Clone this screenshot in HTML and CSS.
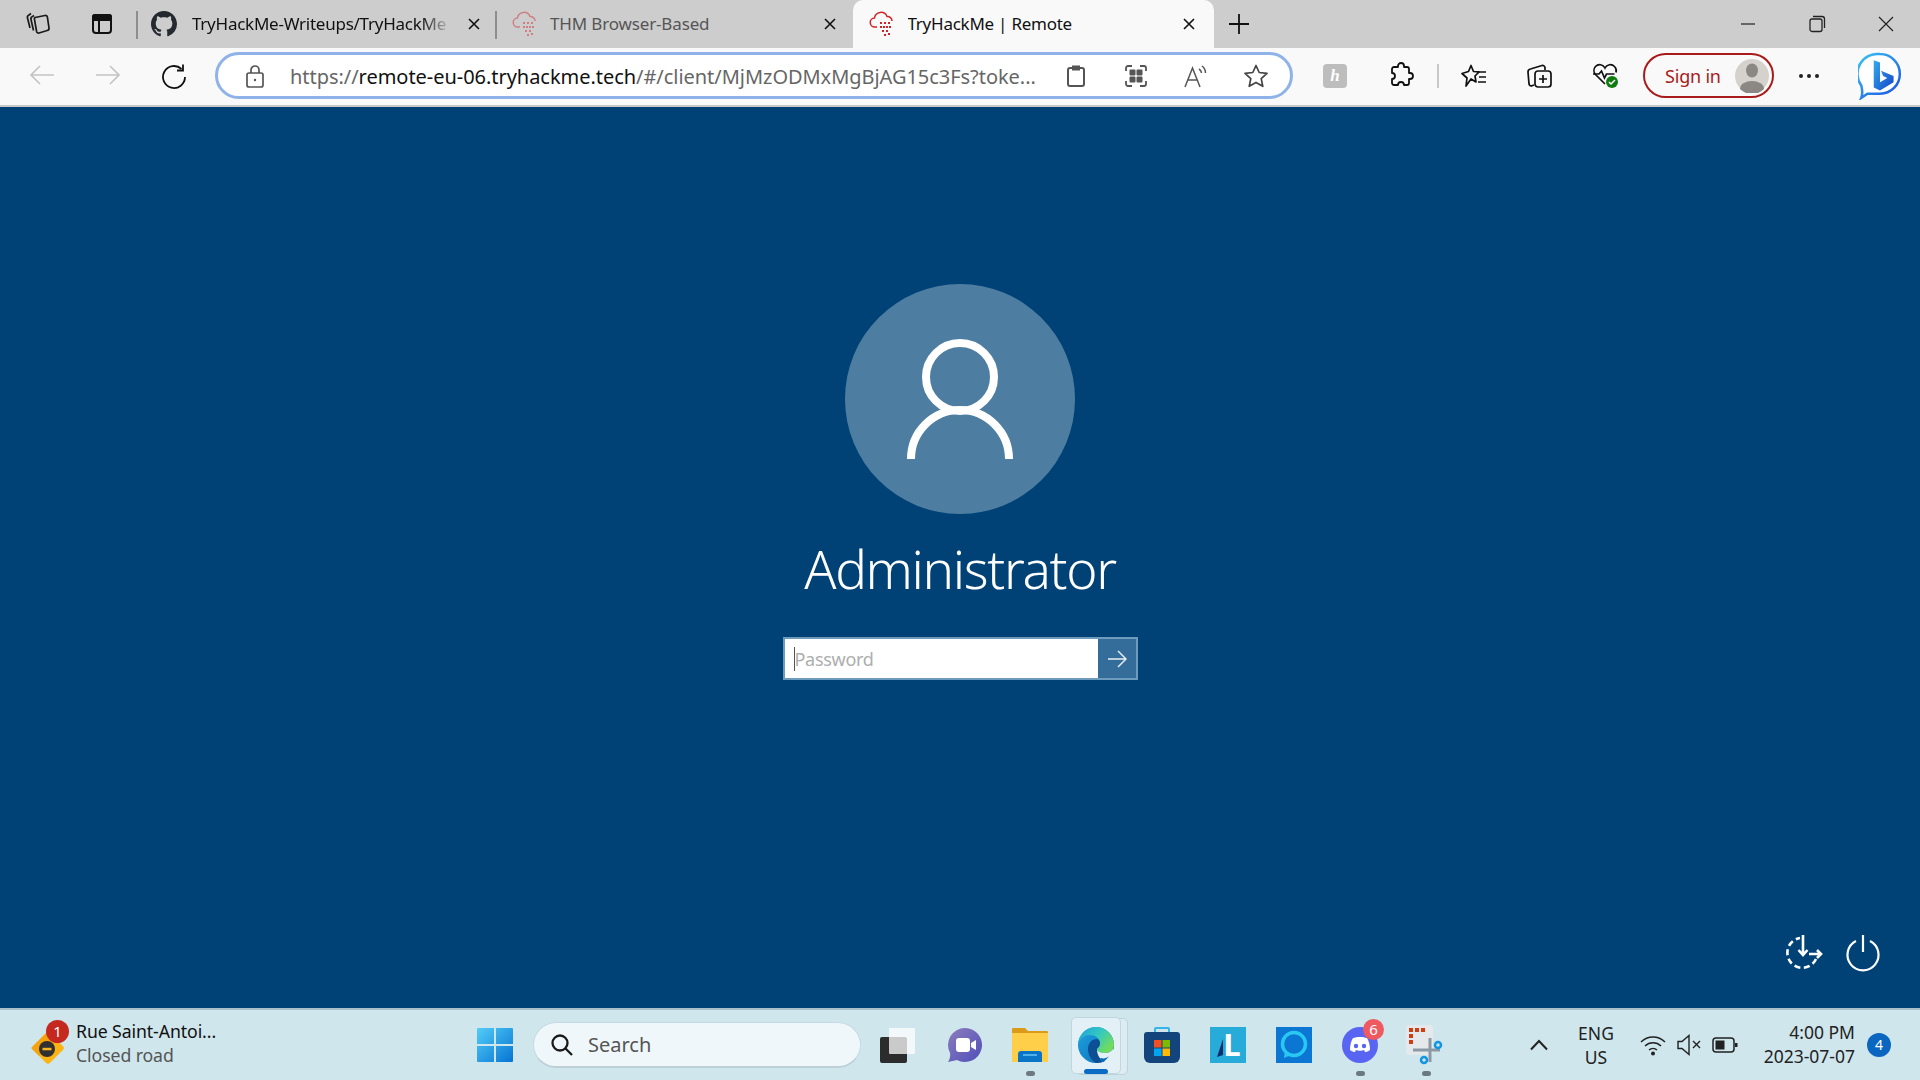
FILE: index.html
```html
<!DOCTYPE html>
<html lang="en">
<head>
<meta charset="utf-8">
<title>TryHackMe | Remote</title>
<link rel="stylesheet" href="styles.css">
</head>
<body>
<header class="tabbar">
  <div class="tb-btn">
    <svg width="26" height="26" viewBox="0 0 26 26" fill="none" stroke="#1a1a1a" stroke-width="1.700"><path d="M10 6.500 20 4.500a2 2 0 0 1 2.400 1.600L24 17a2.200 2.200 0 0 1-1.800 2.500L14 22a2 2 0 0 1-2.400-1.500L9.600 9a2 2 0 0 1 .4-2.500Z"/><path d="M9 4.500 7.500 5.500A2.500 2.500 0 0 0 6 8.500l2.500 11"/><path d="M6 2.500 4 4A2.500 2.500 0 0 0 2.500 7L5 17"/></svg>
  </div>
  <div class="tb-btn">
    <svg width="24" height="24" viewBox="0 0 24 24" fill="none" stroke="#111" stroke-width="2"><rect x="3" y="3" width="18" height="18" rx="3"/><path d="M3 4.500a1.500 1.500 0 0 1 1.500-1.500h15A1.500 1.500 0 0 1 21 4.500V8H3Z" fill="#111"/><path d="M9 8v13"/></svg>
  </div>
  <div class="tab tab-first">
    <svg class="favicon" width="26" height="26" viewBox="0 0 16 16" fill="#24292f"><path d="M8 0C3.580 0 0 3.580 0 8c0 3.540 2.290 6.530 5.470 7.590.4.070.55-.17.55-.38 0-.19-.01-.82-.01-1.490-2.010.37-2.530-.49-2.690-.94-.09-.23-.48-.94-.82-1.130-.28-.15-.68-.52-.01-.53.63-.01 1.080.58 1.230.82.720 1.210 1.870.87 2.330.66.070-.52.280-.87.510-1.070-1.780-.2-3.640-.89-3.640-3.950 0-.87.310-1.590.820-2.150-.08-.2-.36-1.020.08-2.120 0 0 .67-.21 2.200.82.640-.18 1.320-.27 2-.27s1.360.09 2 .27c1.530-1.040 2.200-.82 2.200-.82.440 1.100.160 1.920.080 2.120.51.560.82 1.270.82 2.150 0 3.070-1.870 3.750-3.650 3.950.29.250.54.730.54 1.480 0 1.070-.01 1.930-.01 2.200 0 .21.150.46.550.38A8.010 8.010 0 0 0 16 8c0-4.420-3.580-8-8-8Z"/></svg>
    <span class="tab-title tab-fade">TryHackMe-Writeups/TryHackMe</span>
    <svg class="close" width="14" height="14" viewBox="0 0 14 14" stroke="#111" stroke-width="1.600"><path d="M2 2l10 10M12 2 2 12"/></svg>
  </div>
  <div class="tab tab-second">
    <svg class="favicon faded" width="28" height="26" viewBox="0 0 28 26" fill="none" stroke="#d2232a" stroke-width="1.500"><path d="M8 16H6a4.500 4.500 0 0 1-.5-9A6.500 6.500 0 0 1 18 5.500 4.500 4.500 0 0 1 23 10"/><g fill="#d2232a" stroke="none"><rect x="11" y="11" width="2" height="2"/><rect x="15" y="11" width="2" height="2"/><rect x="19" y="11" width="2" height="2"/><rect x="11" y="15" width="2" height="2"/><rect x="14" y="15" width="2" height="2"/><rect x="17" y="15" width="2" height="2"/><rect x="20" y="15" width="2" height="2"/><rect x="13" y="19" width="2" height="2"/><rect x="17" y="19" width="2" height="2"/><rect x="15" y="23" width="2" height="2"/><rect x="19" y="22" width="2" height="2"/></g></svg>
    <span class="tab-title dim">THM Browser-Based</span>
    <svg class="close" width="14" height="14" viewBox="0 0 14 14" stroke="#111" stroke-width="1.600"><path d="M2 2l10 10M12 2 2 12"/></svg>
  </div>
  <div class="tab tab-active">
    <svg class="favicon" width="28" height="26" viewBox="0 0 28 26" fill="none" stroke="#d2232a" stroke-width="1.500"><path d="M8 16H6a4.500 4.500 0 0 1-.5-9A6.500 6.500 0 0 1 18 5.500 4.500 4.500 0 0 1 23 10"/><g fill="#d2232a" stroke="none"><rect x="11" y="11" width="2" height="2"/><rect x="15" y="11" width="2" height="2"/><rect x="19" y="11" width="2" height="2"/><rect x="11" y="15" width="2" height="2"/><rect x="14" y="15" width="2" height="2"/><rect x="17" y="15" width="2" height="2"/><rect x="20" y="15" width="2" height="2"/><rect x="13" y="19" width="2" height="2"/><rect x="17" y="19" width="2" height="2"/><rect x="15" y="23" width="2" height="2"/><rect x="19" y="22" width="2" height="2"/></g></svg>
    <span class="tab-title">TryHackMe | Remote</span>
    <svg class="close" width="14" height="14" viewBox="0 0 14 14" stroke="#111" stroke-width="1.600"><path d="M2 2l10 10M12 2 2 12"/></svg>
  </div>
  <div class="newtab"><svg width="22" height="22" viewBox="0 0 22 22" stroke="#111" stroke-width="1.800"><path d="M11 1v20M1 11h20"/></svg></div>
  <div class="winctl">
    <span class="wc"><svg width="16" height="16" viewBox="0 0 16 16" stroke="#222" stroke-width="1.200"><path d="M1 8h14"/></svg></span>
    <span class="wc"><svg width="18" height="18" viewBox="0 0 18 18" fill="none" stroke="#222" stroke-width="1.300"><rect x="2" y="4" width="12" height="12.500" rx="2"/><path d="M5 1.500h9a2.500 2.500 0 0 1 2.500 2.500v9"/></svg></span>
    <span class="wc"><svg width="18" height="18" viewBox="0 0 18 18" stroke="#222" stroke-width="1.200"><path d="M2 2l14 14M16 2 2 16"/></svg></span>
  </div>
</header>

<nav class="toolbar">
  <div class="nav-btns">
    <span class="nav-btn"><svg width="26" height="24" viewBox="0 0 26 24" fill="none" stroke="#c4c4c4" stroke-width="1.700"><path d="M25 12H2M11 3l-9 9 9 9"/></svg></span>
    <span class="nav-btn"><svg width="26" height="24" viewBox="0 0 26 24" fill="none" stroke="#c4c4c4" stroke-width="1.700"><path d="M1 12h23M15 3l9 9-9 9"/></svg></span>
    <span class="nav-btn"><svg width="26" height="26" viewBox="0 0 26 26" fill="none" stroke="#111" stroke-width="1.800"><path d="M20.500 6A11 11 0 1 0 24 14"/><path d="M22 1.500V7.500H16"/></svg></span>
  </div>
  <div class="address">
    <span class="lock"><svg width="20" height="24" viewBox="0 0 20 24" fill="none" stroke="#555" stroke-width="1.700"><rect x="2" y="9" width="16" height="14" rx="2"/><path d="M6 9V6a4 4 0 0 1 8 0v3"/><circle cx="10" cy="16" r="1.200" fill="#555" stroke="none"/></svg></span>
    <span class="url"><span class="url-dim">https://</span>remote-eu-06.tryhackme.tech<span class="url-dim">/#/client/MjMzODMxMgBjAG15c3Fs?toke...</span></span>
    <span class="addr-btn"><svg width="20" height="24" viewBox="0 0 20 24" fill="none" stroke="#555" stroke-width="2"><rect x="2" y="4" width="16" height="18" rx="2"/><rect x="6" y="1.500" width="8" height="5" fill="#555" stroke="none"/></svg></span>
    <span class="addr-btn"><svg width="22" height="24" viewBox="0 0 22 24" fill="none" stroke="#555" stroke-width="1.800"><path d="M1 7V4a2 2 0 0 1 2-2h4M15 2h4a2 2 0 0 1 2 2v3M21 17v3a2 2 0 0 1-2 2h-4M7 22H3a2 2 0 0 1-2-2v-3"/><g fill="#555" stroke="none"><rect x="4.500" y="5.500" width="6" height="6" rx="1"/><rect x="11.500" y="5.500" width="6" height="6" rx="1"/><rect x="4.500" y="12.500" width="6" height="6" rx="1"/><rect x="11.500" y="12.500" width="6" height="6" rx="1"/></g></svg></span>
    <span class="addr-btn"><svg width="26" height="24" viewBox="0 0 26 24" fill="none" stroke="#555" stroke-width="1.500"><path d="M2 23 9.500 4 17 23M4.800 16h9.400"/><path d="M16 5a5 5 0 0 1 2.500 4M19 2a9 9 0 0 1 3.500 7"/></svg></span>
    <span class="addr-btn"><svg width="26" height="26" viewBox="0 0 26 26" fill="none" stroke="#444" stroke-width="1.700" stroke-linejoin="round"><path d="M13 2.500 16.200 9.500 24 10.400 18.200 15.600 19.800 23.300 13 19.400 6.200 23.300 7.800 15.600 2 10.400 9.800 9.500Z"/></svg></span>
  </div>
  <div class="tools">
    <span class="ext-h"><span class="ext-letter">h</span></span>
    <span class="tool-btn t-puzzle"><svg width="26" height="28" viewBox="0 0 26 28" fill="none" stroke="#111" stroke-width="1.800" stroke-linejoin="round"><path d="M10 4a3 3 0 0 1 6 0v1h3a2 2 0 0 1 2 2v4h1a3 3 0 0 1 0 6h-1v4a2 2 0 0 1-2 2h-3a3 3 0 0 0-6 0H6a2 2 0 0 1-2-2v-4a3 3 0 0 0 0-6V7a2 2 0 0 1 2-2h4Z"/></svg></span>
    <span class="tool-sep"></span>
    <span class="tool-btn"><svg width="28" height="26" viewBox="0 0 28 26" fill="none" stroke="#111" stroke-width="1.700" stroke-linejoin="round"><path d="M11 2.500 13.500 8.500 19 9 15 13 16 19 11 16 6 23 7 15 2 10.500 8.500 8.500Z"/><path d="M17 9h9M19 14h7M18 19h8"/></svg></span>
    <span class="tool-btn"><svg width="26" height="26" viewBox="0 0 26 26" fill="none" stroke="#111" stroke-width="1.700"><path d="M7 22 4 23a2.500 2.500 0 0 1-2-2L1 9a3 3 0 0 1 2.500-3L15 2.500a2.500 2.500 0 0 1 3 2V7"/><rect x="8" y="8" width="16" height="16" rx="3"/><path d="M16 12v8M12 16h8"/></svg></span>
    <span class="tool-btn"><svg width="28" height="28" viewBox="0 0 28 28" fill="none"><path d="M13 22 3.500 12.500a6 6 0 0 1 0-8 5.800 5.800 0 0 1 9.500 1.500 5.800 5.800 0 0 1 9.500-1.500 6 6 0 0 1 1.500 6" stroke="#111" stroke-width="1.700"/><path d="M1 12h6l2.500-3 3 7 2-4h8" stroke="#111" stroke-width="1.700"/><circle cx="20" cy="20" r="6" fill="#107c10"/><path d="M17 20l2 2 4-4" stroke="#fff" stroke-width="1.500"/></svg></span>
    <span class="signin">
      <span class="signin-text">Sign in</span>
      <span class="avatar"><svg width="34" height="34" viewBox="0 0 34 34"><circle cx="17" cy="17" r="17" fill="#d5d2cd"/><ellipse cx="17" cy="11.500" rx="6" ry="7" fill="#8b8783"/><path d="M5 30a12 8 0 0 1 24 0 17 17 0 0 1-24 0Z" fill="#8b8783"/></svg></span>
    </span>
    <span class="more"><i class="dot"></i><i class="dot"></i><i class="dot"></i></span>
    <span class="bing"><svg width="44" height="48" viewBox="0 0 42 46"><defs><linearGradient id="bb" x1="0" y1="0" x2="1" y2="1"><stop offset="0" stop-color="#37c6f4"/><stop offset="1" stop-color="#1b4fe0"/></linearGradient><linearGradient id="bn" x1="0" y1="0" x2="1" y2="1"><stop offset="0" stop-color="#35a9ee"/><stop offset="1" stop-color="#1447c9"/></linearGradient></defs><path d="M21 2a19 19 0 0 1 0 38H9l-6 4c2-5 1-8 0-12A19 19 0 0 1 21 2Z" fill="#fff" stroke="url(#bb)" stroke-width="2.400"/><path d="M15 8l6 2v19l7-4-4-2-2-5 12 5v6l-13 8-6-3Z" fill="url(#bn)"/></svg></span>
  </div>
</nav>

<main class="desktop">
  <div class="avatar-big">
    <svg width="106" height="120" viewBox="0 0 106 120" fill="none" stroke="#fff" stroke-width="8"><circle cx="53" cy="38" r="34"/><path d="M4 120a49 49 0 0 1 98 0"/></svg>
  </div>
  <div class="username">Administrator</div>
  <div class="pw">
    <div class="pw-input"><i class="caret"></i><span class="pw-place">Password</span></div>
    <div class="pw-go"><svg width="20" height="18" viewBox="0 0 20 18" fill="none" stroke="#e6eef4" stroke-width="1.500"><path d="M1 9h18M11 1l8 8-8 8"/></svg></div>
  </div>
  <div class="sys-actions">
    <svg width="40" height="40" viewBox="0 0 40 40" fill="none" stroke="#fff" stroke-width="2.600"><path d="M31 26a15 15 0 1 1-16-21" stroke-dasharray="6 3.500"/><path d="M18 2v20M13.500 17l4.500 5 4.500-5"/><path d="M24 21h12M32 17l4 4-4 4"/></svg>
    <svg width="36" height="38" viewBox="0 0 36 38" fill="none" stroke="#fff" stroke-width="2.200"><path d="M18 1v17"/><path d="M11 7a15.500 15.500 0 1 0 14 0"/></svg>
  </div>
</main>

<footer class="taskbar">
  <div class="widget">
    <span class="w-icon">
      <svg width="36" height="38" viewBox="0 0 36 38"><rect x="7" y="7" width="24" height="24" rx="3" transform="rotate(45 19 19)" fill="#fbb414"/><path d="M19 2 2 19l8 8L27 10Z" fill="#f39a0b" opacity=".7"/><circle cx="18" cy="20" r="8" fill="#303030"/><rect x="13.500" y="18.800" width="9" height="2.500" fill="#f7b322"/></svg>
      <span class="w-badge">1</span>
    </span>
    <span class="w-text"><span class="w-line1">Rue Saint-Antoi...</span><span class="w-line2">Closed road</span></span>
  </div>
  <div class="start"><svg width="36" height="36" viewBox="0 0 36 36"><defs><linearGradient id="wn" x1="0" y1="0" x2="1" y2="1"><stop offset="0" stop-color="#53cdf7"/><stop offset="1" stop-color="#0674d3"/></linearGradient></defs><path d="M1 1h16v16H0V2a1 1 0 0 1 1-1Zm18 0h16a1 1 0 0 1 1 1v15H19ZM0 19h17v16H1a1 1 0 0 1-1-1Zm19 0h17v15a1 1 0 0 1-1 1H19Z" fill="url(#wn)"/></svg></div>
  <div class="search">
    <svg width="24" height="24" viewBox="0 0 24 24" fill="none" stroke="#1a1a1a" stroke-width="2.300"><circle cx="10" cy="10" r="7.500"/><path d="M15.500 15.500 22 22"/></svg>
    <span class="search-text">Search</span>
  </div>
  <div class="apps">
    <span class="app"><svg width="36" height="36" viewBox="0 0 36 36"><rect x="0" y="10" width="27" height="26" rx="2" fill="#2c2c2c"/><rect x="9" y="1" width="26" height="26" rx="1" fill="#fff" opacity=".75"/></svg></span>
    <span class="app"><svg width="36" height="36" viewBox="0 0 36 36"><defs><linearGradient id="tm" x1="0" y1="0" x2="1" y2="1"><stop offset="0" stop-color="#8c7dbd"/><stop offset="1" stop-color="#4f4fb9"/></linearGradient></defs><path d="M19 1a17 17 0 1 1-8 32l-9 2c2-3 2.500-6 2-9A17 17 0 0 1 19 1Z" fill="url(#tm)"/><rect x="10" y="11" width="14" height="14" rx="3" fill="#fff"/><path d="M25 16l5-3v10l-5-3Z" fill="#fff"/></svg></span>
    <span class="app app-dot"><svg width="36" height="36" viewBox="0 0 36 36"><path d="M0 2a1 1 0 0 1 1-1h12l3 3h19a1 1 0 0 1 1 1v4H0Z" fill="#d99b19"/><rect x="0" y="6" width="36" height="29" fill="#ffcf49"/><path d="M6 35v-8a3 3 0 0 1 3-3h18a3 3 0 0 1 3 3v8Z" fill="#0a74c7"/><rect x="11" y="27" width="14" height="2" fill="#4fb0ec"/></svg></span>
    <span class="app app-active">
      <span class="tile-back"></span>
      <span class="tile"></span>
      <svg class="edge" width="36" height="36" viewBox="0 0 36 36"><defs><linearGradient id="eb" x1="0" y1="0" x2="1" y2="1"><stop offset="0" stop-color="#1fa3e0"/><stop offset="1" stop-color="#0a6db8"/></linearGradient><linearGradient id="eg" x1="0" y1="0" x2="1" y2=".6"><stop offset="0" stop-color="#1b9fdc"/><stop offset=".55" stop-color="#34c9c0"/><stop offset="1" stop-color="#72dc5a"/></linearGradient></defs><path d="M18 0a18 18 0 1 0 9 33.600L36 22V18A18 18 0 0 0 18 0Z" fill="url(#eb)"/><path d="M18 0C28 0 36 8 36 18c0 5-4 8-9 8-5 0-8-2-8-4 0-1 3-2 3-6 0-5-5-8-10-8S3 11 0 16C2 7 9 0 18 0Z" fill="url(#eg)"/><path d="M10 22c0-6 4-10 9-10 2 1 3 2.500 3 4 0 4-3 5-3 6 0 6 3 11 8 12-2 1-5 2-9 2-5-3-8-8-8-14Z" fill="#0c4f94"/><path d="M19 22c0 2 3 4 8 4 4 0 7-2 9-5-1 7-5 11-9 13-5-1-8-6-8-12Z" fill="#e3f0f6"/><path d="M23 31c3 1 6 0 8-2-2 3-4 5-6 6-1 0-4-1-2-4Z" fill="#0a6db8"/></svg>
      <span class="app-bar"></span>
    </span>
    <span class="app"><svg width="36" height="36" viewBox="0 0 36 36"><path d="M11 5V2a1 1 0 0 1 1-1h12a1 1 0 0 1 1 1v3" fill="none" stroke="#35b4ea" stroke-width="2"/><path d="M0 8a3 3 0 0 1 3-3h30a3 3 0 0 1 3 3v22a6 6 0 0 1-6 6H6a6 6 0 0 1-6-6Z" fill="#14447c"/><rect x="10" y="13" width="7.500" height="7.500" fill="#f25022"/><rect x="18.500" y="13" width="7.500" height="7.500" fill="#7fba00"/><rect x="10" y="21.500" width="7.500" height="7.500" fill="#00a4ef"/><rect x="18.500" y="21.500" width="7.500" height="7.500" fill="#ffb900"/></svg></span>
    <span class="app"><span class="l-tile"><svg class="l-wedge" width="36" height="36" viewBox="0 0 36 36"><path d="M13 12V28L7 30Z" fill="#0c2d6b"/></svg><span class="l-letter">L</span></span></span>
    <span class="app"><svg width="36" height="36" viewBox="0 0 36 36"><rect width="36" height="36" fill="#0b77d3"/><circle cx="18" cy="17" r="11.500" fill="none" stroke="#29c8f2" stroke-width="3.500"/><path d="M9 24 8 31l7-3Z" fill="#29c8f2"/></svg></span>
    <span class="app app-dot">
      <svg width="36" height="36" viewBox="0 0 36 36"><circle cx="18" cy="18" r="18" fill="#5865f2"/><path d="M11 11c4-1.500 10-1.500 14 0 2 3 3 7 3 12-2 1.500-3.500 2-5 2l-1-2c-2 1-6 1-8 0l-1 2c-1.500 0-3-.5-5-2 0-5 1-9 3-12Z" fill="#fff"/><circle cx="14" cy="19" r="2.200" fill="#5865f2"/><circle cx="22" cy="19" r="2.200" fill="#5865f2"/></svg>
      <span class="d-badge">6</span>
    </span>
    <span class="app app-dot"><svg width="40" height="42" viewBox="0 0 40 42"><rect x="0" y="1" width="27" height="30" rx="3" fill="#e6e9eb"/><g fill="#d13c10"><rect x="3" y="4" width="4" height="4"/><rect x="9" y="4" width="4" height="4"/><rect x="15" y="4" width="4" height="4"/><rect x="3" y="10" width="4" height="4"/><rect x="3" y="16" width="4" height="4"/></g><path d="M7 26H34M24 14V38" stroke="#8a99a3" stroke-width="3"/><circle cx="32" cy="21" r="3" fill="none" stroke="#1495e0" stroke-width="2.500"/><circle cx="18" cy="36" r="3" fill="none" stroke="#1495e0" stroke-width="2.500"/></svg></span>
  </div>
  <div class="tray">
    <svg class="chev" width="18" height="12" viewBox="0 0 18 12" fill="none" stroke="#222" stroke-width="2"><path d="M1 10.500 9 2l8 8.500"/></svg>
    <span class="lang"><span>ENG</span><span>US</span></span>
    <span class="tray-icons">
      <svg width="26" height="22" viewBox="0 0 26 22" fill="none" stroke="#222" stroke-width="1.500"><path d="M1 8a17 17 0 0 1 24 0M5 12a11.500 11.500 0 0 1 16 0M9 16a6 6 0 0 1 8 0"/><circle cx="13" cy="19.500" r="2" fill="#222" stroke="none"/></svg>
      <svg width="24" height="22" viewBox="0 0 24 22" fill="none" stroke="#222" stroke-width="1.400"><path d="M1 7.500v7h4l7 6V1.500l-7 6Z"/><path d="M16 7l7 7M23 7l-7 7"/></svg>
      <svg width="26" height="20" viewBox="0 0 26 20" fill="none" stroke="#222" stroke-width="1.500"><rect x="1" y="3" width="21" height="14" rx="3"/><rect x="3.500" y="5.500" width="9" height="9" fill="#222" stroke="none"/><rect x="23" y="8" width="2.500" height="4" fill="#222" stroke="none"/></svg>
    </span>
    <span class="clock"><span>4:00 PM</span><span>2023-07-07</span></span>
    <span class="notif">4</span>
  </div>
</footer>
</body>
</html>
```

FILE: styles.css
```css
* { box-sizing: border-box; }
html, body { margin: 0; height: 100%; }
body {
  width: 1920px;
  height: 1080px;
  overflow: hidden;
  display: flex;
  flex-direction: column;
  font-family: "Noto Sans", "Open Sans", sans-serif;
  color: #111;
  background: #004275;
}
svg { display: block; flex: none; }

/* tab strip */
.tabbar {
  height: 48px;
  flex: none;
  display: flex;
  align-items: stretch;
  background: #cdcdcd;
  padding-left: 6px;
}
.tb-btn { width: 64px; display: flex; align-items: center; justify-content: center; }
.tab {
  display: flex;
  align-items: center;
  font-size: 17px;
  padding-bottom: 1px;
}
.tab-first {
  width: 359px;
  margin-left: 2px;
  padding-left: 13px;
}
.tab-second {
  width: 358px;
  padding-left: 15px;
}
.tab-first, .tab-second {
  border-left: 2px solid #8e8e8e;
  border-image: linear-gradient(#cdcdcd 12px, #8e8e8e 12px, #8e8e8e 38px, #cdcdcd 38px) 1;
}
.tab-active {
  width: 361px;
  background: #f9f9f9;
  border-radius: 10px 10px 0 0;
  padding-left: 16px;
}
.tab-title { white-space: nowrap; overflow: hidden; letter-spacing: -.25px; }
.tab-first .tab-title { width: 260px; margin-left: 15px; }
.tab-second .tab-title { width: 258px; margin-left: 10px; letter-spacing: -.15px; }
.tab-active .tab-title { width: 259px; margin-left: 10.500px; }
.tab-fade { mask-image: linear-gradient(90deg, #000 88%, transparent 100%); }
.dim { color: #555; }
.faded { opacity: .45; }
.close { margin-left: 15px; }
.newtab { width: 50px; display: flex; align-items: center; justify-content: center; }
.winctl { margin-left: auto; display: flex; align-items: center; }
.wc { width: 69px; display: flex; justify-content: center; }

/* toolbar */
.toolbar {
  height: 59px;
  flex: none;
  display: flex;
  align-items: center;
  background: #f9f9f9;
  border-bottom: 2px solid #c8c8c8;
  padding: 0 0 2px 9px;
}
.nav-btns { display: flex; width: 206px; }
.nav-btn { width: 66px; display: flex; justify-content: center; }
.address {
  width: 1078px;
  height: 47px;
  background: #fff;
  border: 3px solid #8fb3e8;
  border-radius: 24px;
  display: flex;
  align-items: center;
  padding-left: 27px;
  font-size: 20px;
}
.lock { width: 45px; flex: none; }
.url { width: 756px; flex: none; white-space: nowrap; letter-spacing: -.04px; color: #111; padding-top: 2px; }
.url-dim { color: #666; }
.addr-btn { width: 60px; flex: none; display: flex; justify-content: center; }
.tools { display: flex; align-items: center; flex: 1; }
.ext-h {
  width: 24px; height: 24px; margin-left: 30px;
  border-radius: 4px; background: #bdbdbd;
  display: flex; align-items: center; justify-content: center;
}
.ext-letter { color: #fff; font: italic 700 17px/1 "Liberation Serif", serif; }
.tool-btn { width: 66px; display: flex; justify-content: center; }
.t-puzzle { margin-left: 32px; width: 44px; }
.tool-sep { width: 2px; height: 24px; background: #c9c9c9; margin: 0 2px 0 14px; }
.signin {
  width: 131px; height: 45px;
  margin-left: 4px;
  border: 2px solid #a91b1b;
  border-radius: 23px;
  display: flex; align-items: center; justify-content: space-between;
  padding: 0 3px 0 20px;
  font-size: 18px;
  color: #a91b1b;
  letter-spacing: -.2px;
}
.avatar { width: 34px; height: 34px; }
.more { width: 70px; display: flex; justify-content: center; gap: 4px; }
.dot { width: 4px; height: 4px; border-radius: 50%; background: #222; display: block; }
.bing { width: 44px; margin-left: 14px; }

/* login */
.desktop {
  flex: 1;
  display: flex;
  flex-direction: column;
  align-items: center;
  padding: 177px 39px 35px;
  background: #004275;
  color: #fff;
}
.avatar-big {
  width: 230px; height: 230px;
  border-radius: 50%;
  background: #4d7ea2;
  display: flex; align-items: flex-start; justify-content: center;
  padding-top: 55px;
}
.username {
  margin-top: 17px;
  font-size: 53px;
  font-weight: 300;
  line-height: 76px;
  letter-spacing: -1.350px;
}
.pw {
  margin-top: 30px;
  width: 355px; height: 43px;
  border: 2px solid #6d9bbb;
  display: flex;
}
.pw-input {
  flex: 1;
  background: #fff;
  display: flex; align-items: center;
  padding-left: 9px;
}
.caret { width: 1px; height: 24px; background: #555; display: block; flex: none; }
.pw-place { color: #aeaeae; font-size: 18px; letter-spacing: -.3px; }
.pw-go {
  width: 38px; background: #346d99;
  display: flex; align-items: center; justify-content: center;
}
.sys-actions {
  margin-top: auto;
  align-self: flex-end;
  display: flex;
  align-items: center;
  gap: 20px;
}

/* taskbar */
.taskbar {
  height: 72px;
  flex: none;
  display: flex;
  align-items: center;
  background: #cfe6ed;
  border-top: 2px solid #aabfc9;
  padding-left: 29px;
}
.widget { width: 448px; display: flex; align-items: center; }
.w-icon { width: 47px; height: 44px; position: relative; padding-top: 6px; flex: none; }
.w-badge {
  position: absolute; left: 17px; top: -3px;
  width: 23px; height: 23px; border-radius: 50%;
  background: #c4281f; color: #fff;
  font-size: 15px; line-height: 23px; text-align: center;
}
.w-text { display: flex; flex-direction: column; font-size: 17.700px; line-height: 24px; letter-spacing: -.1px; margin-top: -4px; }
.w-line1 { color: #111; }
.w-line2 { color: #555; }
.start { width: 56px; }
.search {
  width: 328px; height: 46px;
  border-radius: 23px;
  background: #f0f7fa;
  border: 1px solid #c4dbe3;
  border-bottom: 2px solid #bdd0d8;
  display: flex; align-items: center;
  padding-left: 16px;
  gap: 14px;
  font-size: 20px;
  color: #555;
}
.apps { display: flex; margin-left: 4px; }
.app {
  width: 66px; height: 62px;
  position: relative;
  display: flex; align-items: center; justify-content: center;
}
.app-dot::after {
  content: ""; position: absolute; left: 29px; bottom: 0;
  width: 9px; height: 5px; border-radius: 3px; background: #6c7a80;
}
.tile-back {
  position: absolute; left: 13px; top: 4px;
  width: 52px; height: 57px;
  border-radius: 5px;
  background: #dcecf2;
  border: 1px solid #bed3db;
}
.tile {
  position: absolute; left: 8px; top: 3px;
  width: 50px; height: 57px;
  border-radius: 5px;
  background: #e3f0f6;
  border: 1px solid #c2d6de;
}
.edge { position: relative; }
.app-bar {
  position: absolute; left: 21px; bottom: 2px;
  width: 24px; height: 5px; border-radius: 3px; background: #0a6cc4;
}
.l-tile {
  width: 36px; height: 36px;
  background: #27acd9;
  position: relative;
  display: flex; align-items: center; justify-content: center;
}
.l-wedge { position: absolute; left: 0; top: 0; }
.l-letter {
  position: relative; color: #fff; font-size: 31px; line-height: 36px; font-weight: 700;
  margin-left: 8px; margin-top: -2px;
}
.d-badge {
  position: absolute; left: 36px; top: 5px;
  width: 21px; height: 21px; border-radius: 50%;
  background: #ee5a5f; color: #fff;
  font-size: 15px; line-height: 21px; text-align: center;
}
.tray { display: flex; align-items: center; flex: 1; padding-left: 71px; }
.chev { margin-right: 30px; }
.lang { display: flex; flex-direction: column; align-items: center; width: 36px; font-size: 17.500px; line-height: 24px; color: #222; }
.tray-icons { display: flex; align-items: center; gap: 11px; margin-left: 26px; }
.clock {
  display: flex; flex-direction: column; align-items: flex-end;
  width: 117px; font-size: 17.500px; line-height: 24px; color: #222;
  margin-top: -2px;
}
.notif {
  width: 24px; height: 24px; margin-left: 12px; border-radius: 50%;
  background: #0b66c0; color: #fff;
  font-size: 14px; line-height: 24px; text-align: center;
}
```
